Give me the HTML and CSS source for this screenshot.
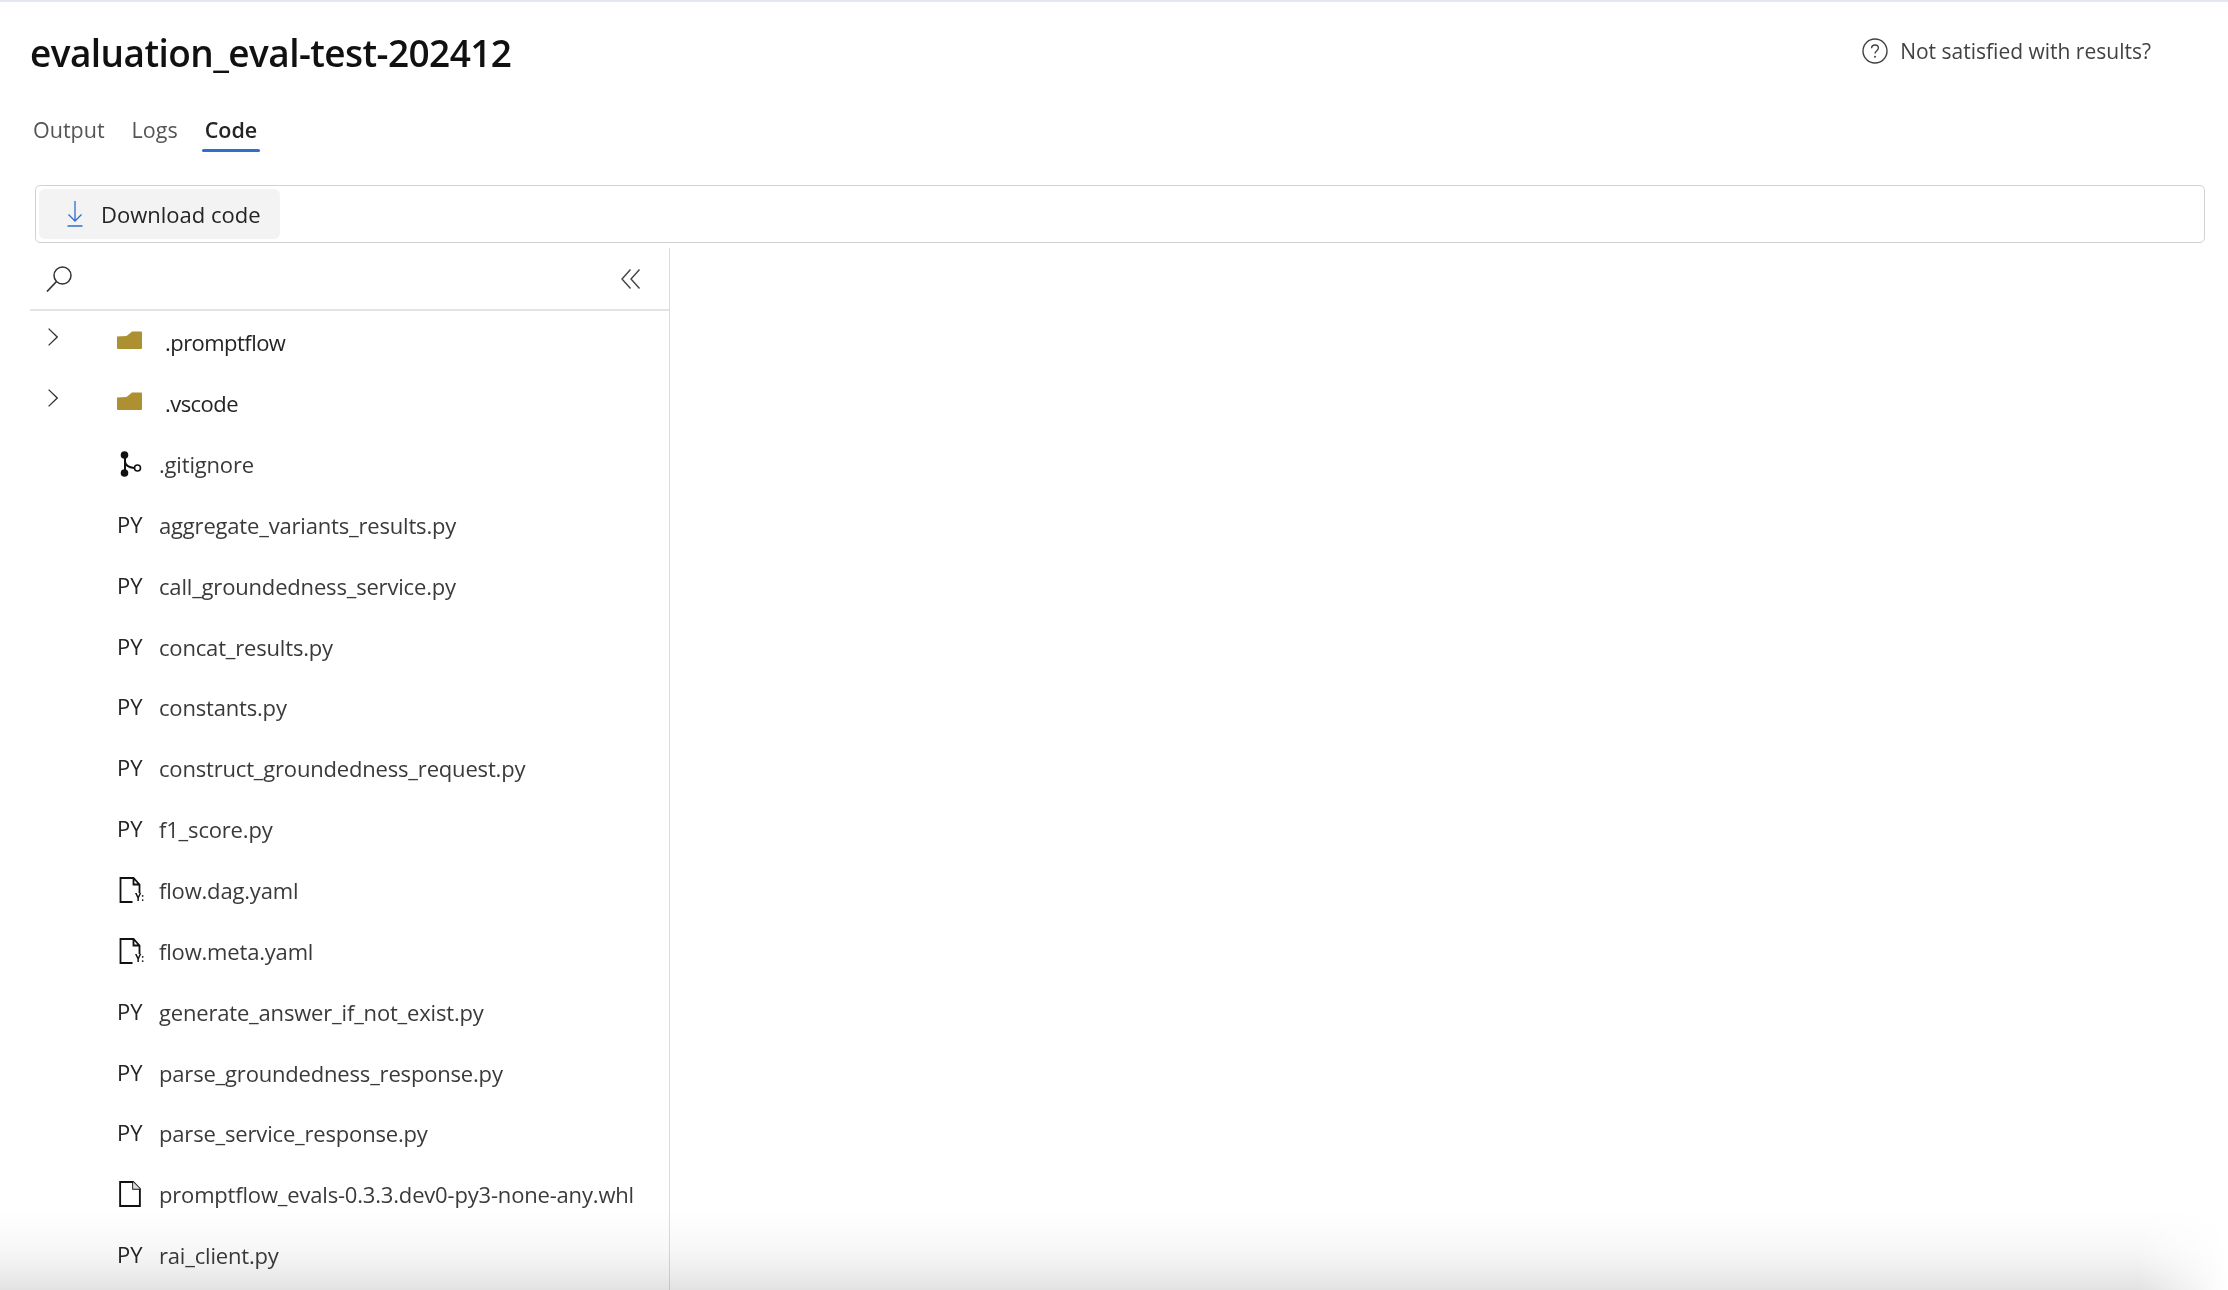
FILE: index.html
```html
<!DOCTYPE html>
<html lang="en">
<head>
<meta charset="utf-8">
<title>evaluation_eval-test-202412</title>
<link rel="stylesheet" href="styles.css">
</head>
<body>
<svg class="defs" width="0" height="0" aria-hidden="true">
  <defs>
    <symbol id="chev" viewBox="0 0 10 18"><path d="M0.6 0.6 9.2 9 0.6 17.4" fill="none" stroke="#333" stroke-width="1.3"/></symbol>
    <symbol id="folder" viewBox="0 0 25 18"><path d="M0 5.500 9.500 5 14.500 1 15 0.500H24Q25 0.500 25 1.500V17Q25 18 24 18H1Q0 18 0 17Z" fill="#ad9032"/></symbol>
    <symbol id="git" viewBox="0 0 22 26"><path d="M5 3V22M5 11 Q6 16 14 17" fill="none" stroke="#111" stroke-width="2"/><circle cx="4.5" cy="4" r="3.8" fill="#111"/><circle cx="4.5" cy="22" r="3.8" fill="#111"/><circle cx="17.5" cy="17" r="3" fill="#fff" stroke="#111" stroke-width="1.6"/></symbol>
    <symbol id="file" viewBox="0 0 21 25"><path d="M1 1H13.5L20 7.5V24H1ZM13.5 1V7.5H20" fill="none" stroke="#111" stroke-width="1.8"/><path d="M13.5 1 20 7.5H13.5Z" fill="#ddd"/></symbol>
    <symbol id="yaml" viewBox="0 0 21 26"><path d="M13 25H1V1H14L20 7.5V16M14 1V7.5H20" fill="none" stroke="#111" stroke-width="1.8"/></symbol>
  </defs>
</svg>
<main class="page">
  <header class="head">
    <h1 class="title">evaluation_eval-test-202412</h1>
    <a class="help">
      <svg class="help-icon" viewBox="0 0 26 26"><circle cx="13" cy="13" r="12" fill="none" stroke="#424242" stroke-width="1.4"/><path d="M9.6 10.2C9.6 8.2 11.1 7 13 7s3.4 1.2 3.4 3c0 2.6-3.4 2.8-3.4 5.6" fill="none" stroke="#424242" stroke-width="1.4"/><circle cx="13" cy="18.8" r="1" fill="#424242"/></svg>
      <span>Not satisfied with results?</span>
    </a>
  </header>
  <nav class="tabs">
    <span class="tab">Output</span>
    <span class="tab">Logs</span>
    <span class="tab active">Code</span>
  </nav>
  <div class="toolbar">
    <button class="btn">
      <svg class="btn-icon" viewBox="0 0 16 26"><path d="M8 0V20M1.5 13.5 8 20l6.500-6.500" fill="none" stroke="#2f6fc9" stroke-width="1.300"/><path d="M0.500 25H15.500" stroke="#2f6fc9" stroke-width="1.500"/></svg>
      <span>Download code</span>
    </button>
  </div>
  <div class="split">
    <aside class="tree">
      <div class="tree-head">
        <svg class="search" viewBox="0 0 26 26"><circle cx="16.500" cy="9.500" r="8.500" fill="none" stroke="#333" stroke-width="1.500"/><path d="M10.500 15.500 1 25.500" stroke="#333" stroke-width="1.700"/></svg>
        <svg class="collapse" viewBox="0 0 20 20"><path d="M9.500 0.500 1 10l8.500 9.500M18.500 0.500 10 10l8.500 9.500" fill="none" stroke="#444" stroke-width="1.400"/></svg>
      </div>
      <ul class="rows">
        <li class="row dir"><svg class="chev"><use href="#chev"/></svg><svg class="ic-folder"><use href="#folder"/></svg><span class="name">.promptflow</span></li>
        <li class="row dir"><svg class="chev"><use href="#chev"/></svg><svg class="ic-folder"><use href="#folder"/></svg><span class="name">.vscode</span></li>
        <li class="row"><span class="ic"><svg class="ic-git"><use href="#git"/></svg></span><span class="name">.gitignore</span></li>
        <li class="row"><span class="ic py">PY</span><span class="name">aggregate_variants_results.py</span></li>
        <li class="row"><span class="ic py">PY</span><span class="name">call_groundedness_service.py</span></li>
        <li class="row"><span class="ic py">PY</span><span class="name">concat_results.py</span></li>
        <li class="row"><span class="ic py">PY</span><span class="name">constants.py</span></li>
        <li class="row"><span class="ic py">PY</span><span class="name">construct_groundedness_request.py</span></li>
        <li class="row"><span class="ic py">PY</span><span class="name">f1_score.py</span></li>
        <li class="row"><span class="ic yaml"><svg class="ic-file"><use href="#yaml"/></svg><i class="y">Y:</i></span><span class="name">flow.dag.yaml</span></li>
        <li class="row"><span class="ic yaml"><svg class="ic-file"><use href="#yaml"/></svg><i class="y">Y:</i></span><span class="name">flow.meta.yaml</span></li>
        <li class="row"><span class="ic py">PY</span><span class="name">generate_answer_if_not_exist.py</span></li>
        <li class="row"><span class="ic py">PY</span><span class="name">parse_groundedness_response.py</span></li>
        <li class="row"><span class="ic py">PY</span><span class="name">parse_service_response.py</span></li>
        <li class="row"><span class="ic"><svg class="ic-file"><use href="#file"/></svg></span><span class="name">promptflow_evals-0.3.3.dev0-py3-none-any.whl</span></li>
        <li class="row"><span class="ic py">PY</span><span class="name">rai_client.py</span></li>
      </ul>
    </aside>
  </div>
</main>
<div class="shade"></div>
</body>
</html>
```
FILE: styles.css
```css
* { box-sizing: border-box; }
html, body { margin: 0; height: 1290px; overflow: hidden; background: #fff; }
body { font-family: "Open Sans", "Noto Sans", sans-serif; color: #424242; position: relative; }
.defs { position: absolute; }
.page { height: 1290px; border-top: 2px solid #e3e7ee; display: flex; flex-direction: column; overflow: hidden; }
.head { display: flex; justify-content: space-between; height: 74px; padding: 0 77px 0 30px; }
.title { margin: 0; font-size: 37px; line-height: 48px; padding-top: 27px; font-weight: 600; color: #111; letter-spacing: -0.57px; white-space: nowrap; }
.help { display: flex; align-items: center; gap: 12px; height: 26px; margin-top: 36px; font-size: 21px; color: #424242; }
.help-icon { width: 26px; height: 26px; }
.tabs { display: flex; gap: 27px; height: 78px; padding: 35px 0 0 33px; font-size: 21.5px; }
.tab { position: relative; height: 41px; line-height: 38px; color: #555; }
.tab.active { color: #242424; font-weight: 600; }
.tab.active::after { content: ""; position: absolute; left: -3px; right: -3px; bottom: 0; height: 3px; border-radius: 2px; background: #2f6fc9; }
.toolbar { margin: 31px 23px 0 35px; height: 58px; border: 1px solid #d1d1d1; border-radius: 5px; padding: 3px 3px; flex: none; }
.btn { display: flex; align-items: center; gap: 18px; width: 241px; height: 50px; padding: 0 0 0 28px; border: 0; border-radius: 6px; background: #f3f3f3; font: 500 22px "Open Sans", "Noto Sans", sans-serif; color: #242424; }
.btn-icon { width: 16px; height: 26px; flex: none; }
.split { flex: 1; display: flex; padding: 5px 0 0 30px; min-height: 0; }
.tree { width: 640px; border-right: 1px solid #dcdcdc; }
.tree-head { height: 63px; display: flex; justify-content: space-between; align-items: center; padding: 1px 28px 0 16px; border-bottom: 2px solid #e4e4e4; }
.search { width: 26px; height: 26px; }
.collapse { width: 20px; height: 20px; }
.rows { list-style: none; margin: 0; padding: 1px 0 0; }
.row { height: 60.85px; display: flex; align-items: center; padding-left: 87px; position: relative; font-size: 22px; color: #3a3a3a; white-space: nowrap; }
.name { margin-left: 17px; letter-spacing: -0.18px; }
.ic { width: 25px; height: 26px; display: block; position: relative; flex: none; }
.py { font-size: 22px; line-height: 22px; margin-top: 2px; color: #242424; }
.ic-git { width: 22px; height: 26px; margin-left: 3px; display: block; }
.ic-file { width: 22px; height: 26px; margin-left: 2px; display: block; }
.y { position: absolute; left: 18px; bottom: -1px; font: 700 10px "Open Sans", sans-serif; color: #111; }
.dir { color: #242424; }
.dir .name { margin-left: 23px; letter-spacing: -0.55px; }
.chev { position: absolute; left: 18px; top: 16px; width: 10px; height: 18px; }
.ic-folder { width: 25px; height: 18px; margin-top: -4px; flex: none; }
.shade { position: absolute; left: 0; right: 0; bottom: 0; height: 80px; pointer-events: none; mix-blend-mode: multiply; background: linear-gradient(to bottom, #fff, #f7f7f7 50%, #eeeeee 75%, #e2e2e2); -webkit-mask-image: linear-gradient(to right, #000 96%, transparent 100%); mask-image: linear-gradient(to right, #000 96%, transparent 100%); }
```
